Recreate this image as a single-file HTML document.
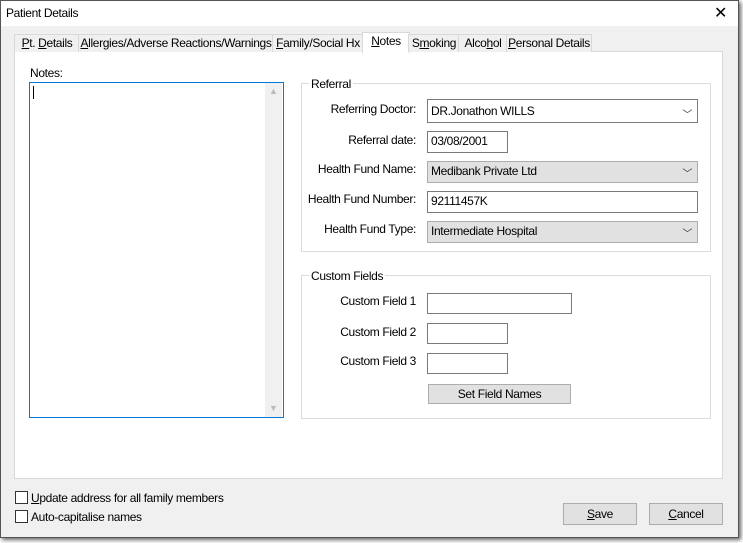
<!DOCTYPE html><html><head><style>
body{margin:0;width:743px;height:543px;background:#fff;font-family:"Liberation Sans",sans-serif;font-size:12px;letter-spacing:-0.35px;color:#000;position:relative;overflow:hidden}
.a{position:absolute;white-space:nowrap}
.win{position:absolute;left:0;top:0;width:737px;height:536px;border:1px solid #555;background:#f0f0f0;box-shadow:2px 2px 4px rgba(0,0,0,.6)}
.tab{position:absolute;top:33px;height:17px;border:1px solid #d9d9d9;border-bottom:none;background:#f0f0f0;text-align:center;line-height:17px;white-space:nowrap;overflow:hidden}
.box{position:absolute;border:1px solid #7a7a7a;background:#fff;line-height:19px;padding-left:3px;box-sizing:border-box;white-space:nowrap}
.gray{background:#e1e1e1;border-color:#adadad}
.grp{position:absolute;border:1px solid #dcdcdc}
.lbl{position:absolute;text-align:right;white-space:nowrap}
.chev{position:absolute;right:5px;top:3px;color:#333;font-size:10px}
.btn{position:absolute;border:1px solid #adadad;background:#e1e1e1;text-align:center;box-sizing:border-box;white-space:nowrap}
.cb{position:absolute;width:13px;height:13px;border:1px solid #333;background:#fff;box-sizing:border-box}
</style></head><body>
<div class="win">
<div class="a" style="left:0;top:0;width:737px;height:25px;background:#fff"></div>
<div class="a" style="left:5px;top:5px;font-size:12px">Patient Details</div>
<div class="a" style="left:713px;top:2px;font-size:16px">✕</div>
<div class="a" style="left:13px;top:50px;width:707px;height:426px;background:#fff;border:1px solid #d9d9d9"></div>
<div class="tab" style="left:13px;width:64px"><u>P</u>t. <u>D</u>etails</div>
<div class="tab" style="left:77px;width:194px"><u>A</u>llergies/Adverse Reactions/Warnings</div>
<div class="tab" style="left:271px;width:90px"><u>F</u>amily/Social Hx</div>
<div class="tab" style="left:361px;top:31px;height:20px;width:46px;background:#fff"><u>N</u>otes</div>
<div class="tab" style="left:407px;width:50px">S<u>m</u>oking</div>
<div class="tab" style="left:457px;width:48px">Alco<u>h</u>ol</div>
<div class="tab" style="left:505px;width:84px"><u>P</u>ersonal Details</div>
<div class="a" style="left:29px;top:65px">Notes:</div>
<div class="a" style="left:28px;top:81px;width:253px;height:334px;border:1px solid #0078d7;background:#fff"></div>
<div class="a" style="left:264px;top:82px;width:17px;height:334px;background:#f0f0f0"></div>
<div class="a" style="left:268px;top:85px;color:#bbb;font-size:9px">▲</div>
<div class="a" style="left:268px;top:402px;color:#bbb;font-size:9px">▼</div>
<div class="a" style="left:32px;top:85px;width:1px;height:13px;background:#000"></div>
<div class="grp" style="left:300px;top:82px;width:408px;height:167px"></div>
<div class="a" style="left:308px;top:76px;background:#fff;padding:0 2px">Referral</div>
<div class="lbl" style="right:322px;top:101px">Referring Doctor:</div>
<div class="box" style="left:426px;top:98px;width:271px;height:24px;line-height:22px">DR.Jonathon WILLS<span class="chev" style="top:5px">﹀</span></div>
<div class="lbl" style="right:322px;top:132px">Referral date:</div>
<div class="box" style="left:426px;top:130px;width:81px;height:22px">03/08/2001</div>
<div class="lbl" style="right:322px;top:161px">Health Fund Name:</div>
<div class="box gray" style="left:426px;top:160px;width:271px;height:22px">Medibank Private Ltd<span class="chev">﹀</span></div>
<div class="lbl" style="right:322px;top:191px">Health Fund Number:</div>
<div class="box" style="left:426px;top:190px;width:271px;height:22px">92111457K</div>
<div class="lbl" style="right:322px;top:221px">Health Fund Type:</div>
<div class="box gray" style="left:426px;top:220px;width:271px;height:22px">Intermediate Hospital<span class="chev">﹀</span></div>
<div class="grp" style="left:300px;top:274px;width:408px;height:142px"></div>
<div class="a" style="left:308px;top:268px;background:#fff;padding:0 2px">Custom Fields</div>
<div class="lbl" style="right:322px;top:293px">Custom Field 1</div>
<div class="box" style="left:426px;top:292px;width:145px;height:21px"></div>
<div class="lbl" style="right:322px;top:324px">Custom Field 2</div>
<div class="box" style="left:426px;top:322px;width:81px;height:21px"></div>
<div class="lbl" style="right:322px;top:353px">Custom Field 3</div>
<div class="box" style="left:426px;top:352px;width:81px;height:21px"></div>
<div class="btn" style="left:427px;top:383px;width:143px;height:20px;line-height:18px">Set Field Names</div>
<div class="cb" style="left:14px;top:490px"></div>
<div class="a" style="left:30px;top:490px"><u>U</u>pdate address for all family members</div>
<div class="cb" style="left:14px;top:509px"></div>
<div class="a" style="left:30px;top:509px">Auto-capitalise names</div>
<div class="btn" style="left:562px;top:502px;width:74px;height:22px;line-height:20px"><u>S</u>ave</div>
<div class="btn" style="left:648px;top:502px;width:74px;height:22px;line-height:20px"><u>C</u>ancel</div>
</div>
</body></html>
